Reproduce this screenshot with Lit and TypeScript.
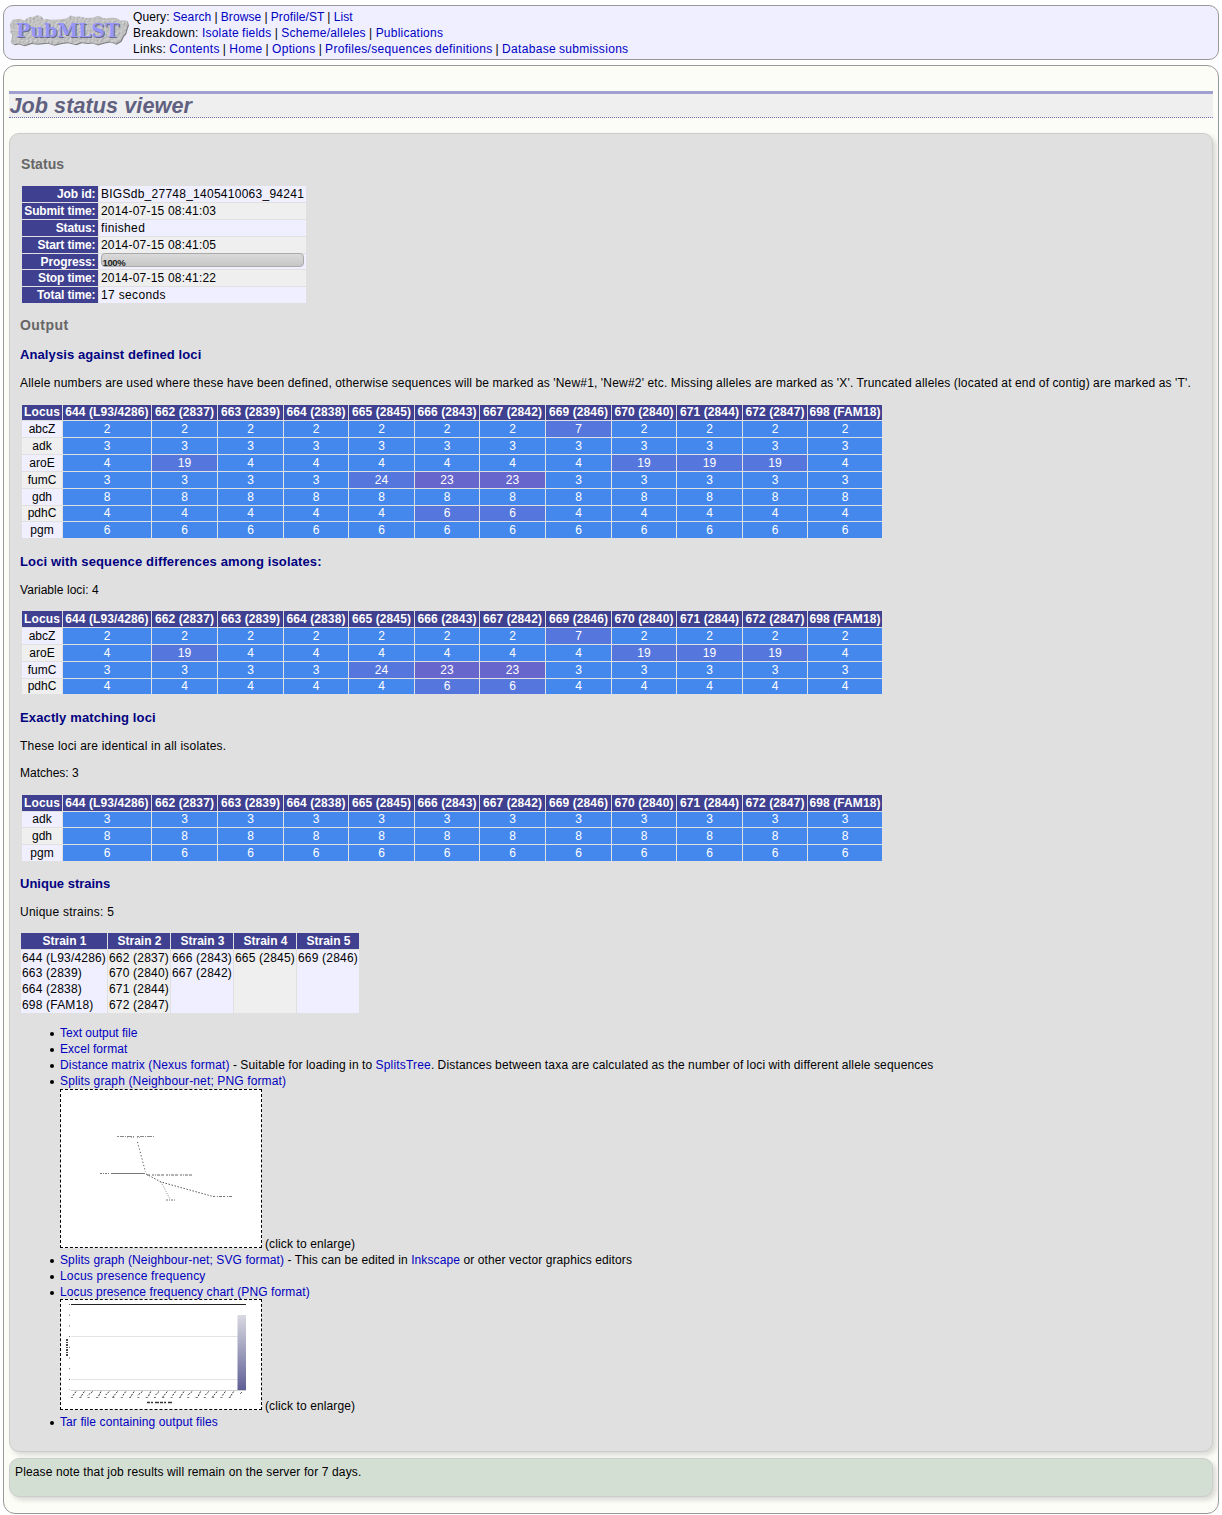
import { LitElement, html, css, svg } from "lit";
import { customElement, property } from "lit/decorators.js";
import { classMap } from "lit/directives/class-map.js";

const ISOLATES = [
  "644 (L93/4286)", "662 (2837)", "663 (2839)", "664 (2838)", "665 (2845)", "666 (2843)",
  "667 (2842)", "669 (2846)", "670 (2840)", "671 (2844)", "672 (2847)", "698 (FAM18)",
];

const ALLELES: Record<string, number[]> = {
  abcZ: [2, 2, 2, 2, 2, 2, 2, 7, 2, 2, 2, 2],
  adk: [3, 3, 3, 3, 3, 3, 3, 3, 3, 3, 3, 3],
  aroE: [4, 19, 4, 4, 4, 4, 4, 4, 19, 19, 19, 4],
  fumC: [3, 3, 3, 3, 24, 23, 23, 3, 3, 3, 3, 3],
  gdh: [8, 8, 8, 8, 8, 8, 8, 8, 8, 8, 8, 8],
  pdhC: [4, 4, 4, 4, 4, 6, 6, 4, 4, 4, 4, 4],
  pgm: [6, 6, 6, 6, 6, 6, 6, 6, 6, 6, 6, 6],
};

const STATUS: [string, string, string][] = [
  ["Job id:", "BIGSdb_27748_1405410063_94241", "s25"],
  ["Submit time:", "2014-07-15 08:41:03", "s20"],
  ["Status:", "finished", "s35"],
  ["Start time:", "2014-07-15 08:41:05", "s20"],
  ["Progress:", "100%", ""],
  ["Stop time:", "2014-07-15 08:41:22", "s20"],
  ["Total time:", "17 seconds", "s35"],
];

const STRAINS = [
  ["644 (L93/4286)", "663 (2839)", "664 (2838)", "698 (FAM18)"],
  ["662 (2837)", "670 (2840)", "671 (2844)", "672 (2847)"],
  ["666 (2843)", "667 (2842)"],
  ["665 (2845)"],
  ["669 (2846)"],
];

const ROCK =
  "M.7 10.700L3.300 5.700L7 5.200L11.700 4.700L14.500 6.500L20 3.300L24 2.800L28.300 1.200L32 2L34 5.500L38 5L43 5.700L48 5.500L53 5L58 4L61.700 1.500L66 2.800L70 2.600L78 4L84 3.500L90 1.800L94 4L98 4.300L103 3.600L108 4.200L111 6.500L118 6.500L119 10.700L117.500 15L116.500 19L114 22L111.700 26.700L106.700 29.700L101 27.500L95 28.500L88 30.500L83 28.500L78 29L72 28.300L66.700 30.200L58 28.300L52 29L45 30.700L38 28.700L28 29.800L22 29L15 31.200L9 29.500L5 30.300L1.500 28L2.300 25.700L3.300 20.700L.8 18L1.800 15.500Z";

@customElement("pub-logo")
class PubLogo extends LitElement {
  static styles = css`
    :host { display: block; width: 120px; height: 34px; }
    svg { display: block; }
    .name { font-family: "DejaVu Serif", serif; font-weight: bold; font-size: 17.6px; }
    .dark { fill: #6a6a84; }
    .light { fill: #9696f8; }
  `;
  render() {
    return html`<svg width="120" height="34" viewBox="0 0 120 34">
      <defs>
        <filter id="stone" x="0" y="0" width="1" height="1" color-interpolation-filters="sRGB">
          <feTurbulence type="fractalNoise" baseFrequency="0.55" numOctaves="2" seed="4" result="n"/>
          <feDiffuseLighting in="n" surfaceScale="0.55" diffuseConstant="1.12" lighting-color="#ccc" result="l">
            <feDistantLight azimuth="225" elevation="58"/>
          </feDiffuseLighting>
          <feComposite in="l" in2="SourceGraphic" operator="in"/>
        </filter>
      </defs>
      <path transform="translate(.9 1)" fill="#808080" d=${ROCK}/>
      <path filter="url(#stone)" fill="#bbb" d=${ROCK}/>
      <text class="name dark" x="8" y="23.6" textLength="103" lengthAdjust="spacingAndGlyphs">PubMLST</text>
      <text class="name light" x="7" y="22.7" textLength="103" lengthAdjust="spacingAndGlyphs">PubMLST</text>
    </svg>`;
  }
}

@customElement("locus-table")
class LocusTable extends LitElement {
  @property({ type: Array }) loci: string[] = [];

  static styles = css`
    :host { display: block; }
    .grid {
      display: grid; width: 860px; gap: 1px; margin-left: 2px;
      grid-template-columns: 40px 88px 65px 65px 64px 65px 64px 65px 65px 64px 65px 64px 74px;
      text-align: center; line-height: 17px; white-space: nowrap;
    }
    .all { grid-template-rows: 15px 16px 16px 16px 16px 16px 15px 16px; }
    .variable { grid-template-rows: 16px 16px 16px 16px 15px; }
    .same { grid-template-rows: 16px 15px 16px 16px; }
    .grid > * { height: 100%; overflow: visible; }
    .head { background: #404090; color: #fff; font-weight: bold; letter-spacing: .1px; }
    .all .head { line-height: 15px; }
    .locus { background: #efefff; }
    .even { background: #efefef; }
    .short { line-height: 15px; }
    .a0 { background: #4488ee; color: #fff; }
    .a1 { background: #5577dd; color: #fff; }
    .a2 { background: #6666cc; color: #fff; }
  `;

  private level(locus: string, value: number) {
    const seen = [...new Set(ALLELES[locus])];
    return "a" + seen.indexOf(value);
  }

  private isShort(r: number) {
    const n = this.loci.length;
    return (n === 7 && r === 5) || (n === 4 && r === 3) || (n === 3 && r === 0);
  }

  render() {
    const n = this.loci.length;
    return html`<div class=${classMap({ grid: true, all: n === 7, variable: n === 4, same: n === 3 })}>
      <div class="head">Locus</div>
      ${ISOLATES.map((i) => html`<div class="head">${i}</div>`)}
      ${this.loci.map((l, r) => {
        const s = this.isShort(r) ? "short" : "";
        return html`
        <div class="locus ${r % 2 ? "even" : ""} ${s}">${l}</div>
        ${ALLELES[l].map((v) => html`<div class="${this.level(l, v)} ${s}">${v}</div>`)}`;
      })}
    </div>`;
  }
}

@customElement("app-root")
class AppRoot extends LitElement {
  static styles = css`
    :host {
      display: block; height: 1515px; box-sizing: border-box; padding: 5px 3px 0; background: #fff;
      font-family: "Liberation Sans", Arial, sans-serif; font-size: 12px; line-height: 16px; color: #000;
    }
    * { box-sizing: border-box; }
    a { color: #0000bf; text-decoration: none; }
    .s05 { letter-spacing: .05px; }
    .s10 { letter-spacing: .1px; }
    .s13 { letter-spacing: .135px; }
    .s15 { letter-spacing: .155px; }
    .s20 { letter-spacing: .2px; }
    .s23 { letter-spacing: .235px; }
    .s25 { letter-spacing: .26px; }
    .s35 { letter-spacing: .35px; }
    .s45 { letter-spacing: .45px; }
    .nav1 { letter-spacing: .11px; word-spacing: -.4px; }
    .nav2 { letter-spacing: .23px; word-spacing: -.35px; }
    .nav3 { letter-spacing: .31px; word-spacing: -.6px; }
    .prose { letter-spacing: .206px; word-spacing: -.33px; }
    .matrix { letter-spacing: .178px; word-spacing: -.33px; }
    .banner {
      display: flex; gap: 4px; height: 55px; padding: 3px 5px; white-space: nowrap;
      background: #efefff; border: 1px solid #999; border-radius: 10px;
    }
    .banner pub-logo { margin-top: 5px; }
    .main {
      height: 1449px; margin-top: 5px; padding: 25px 5px 0; white-space: nowrap;
      background: #fcfdf7; border: 1px solid #999; border-radius: 12px;
    }
    .title {
      margin: 0; height: 27px; background: #efefef; border-top: 3px solid #a0a0d0; border-bottom: 1px dotted #7070b0;
      color: #606080; font-size: 21.6px; line-height: 23px; font-weight: bold; font-style: italic;
      letter-spacing: .08px; padding-left: .4px;
    }
    .panel {
      height: 1319px; margin-top: 15px; padding: 22px 10px 0; background: #e0e0e0;
      border: 1px solid #ccc; border-radius: 10px; box-shadow: 3px 3px 5px #d8d8d4;
    }
    .note {
      height: 39px; margin-top: 6px; padding: 5px; background: #d4dfd4;
      border: 1px solid #ccc; border-radius: 10px; box-shadow: 3px 3px 5px #d8d8d4;
    }
    h2 { margin: 0; font-size: 14px; line-height: 16px; color: #666; }
    h2.first { padding-left: 1px; }
    h3 { margin: 0; font-size: 13px; line-height: 16px; color: #000080; }
    p { margin: 0; }
    .status {
      display: grid; grid-template-columns: 76px 207px; gap: 1px; margin: 14px 0 14px 2px;
      grid-template-rows: 16px 16px 16px 16px 15px 16px 16px; line-height: 17px;
    }
    .key {
      background: #404090; color: #fff; font-weight: bold; text-align: right; padding-right: 2.5px; height: 100%;
      letter-spacing: -.12px;
    }
    .val { background: #efefff; padding-left: 2px; height: 100%; }
    .even { background: #efefef; }
    .bar {
      height: 14px; width: 203px; margin-top: -1px; padding: 3px 0 0 .5px; overflow: hidden;
      border: 1px solid #aaa; border-radius: 4px; background: linear-gradient(#dadada, #c6c6c6);
      font-size: 9.5px; line-height: 12px; font-weight: bold; color: #222; letter-spacing: -.4px;
    }
    .strains {
      display: grid; grid-template-columns: 86px 62px 62px 62px 62px; grid-template-rows: 16px 63px;
      gap: 1px; margin: 13px 0 0 1px;
    }
    .shead { background: #404090; color: #fff; font-weight: bold; text-align: center; padding-left: 1px; }
    .strain { background: #efefff; padding-left: 1px; letter-spacing: .19px; }
    .strain div:nth-child(n + 2) { margin-top: -1px; }
    .strain div:nth-child(n + 3) { margin-top: 0; }
    .strain.even { background: #efefef; }
    ul { margin: 12px 0 0; padding: 0 0 0 40px; list-style: none; }
    li.item::before {
      content: ""; float: left; width: 4.400px; height: 4.400px; margin: 6.800px 0 0 -10.200px; border-radius: 50%; background: #000;
    }
    .shot { display: flex; align-items: flex-end; gap: 3px; padding-bottom: 4px; letter-spacing: .12px; }
    .net { height: 163px; }
    .freq { height: 114px; }
    .shot span { margin-bottom: -4px; }
    .pic { width: 202px; border: 1px dashed #000; background: #fff; flex: none; }
    .net .pic { height: 159px; }
    .freq .pic { height: 111px; }
    .pic svg { display: block; }
    .g11 { margin-top: 11px; }
    .g12 { margin-top: 12px; }
    .g13 { margin-top: 13px; }
    .g14 { margin-top: 14px; }
    .g15 { margin-top: 15px; }
    .g16 { margin-top: 16px; }
  `;

  private net() {
    return svg`<svg width="200" height="157" viewBox="61 1090 200 157" fill="none" stroke="#777" stroke-width="1">
      <path d="M137.500 1142L145.500 1172" stroke-dasharray="1.200 2.200" stroke="#555"/>
      <path d="M111 1173.500H145"/>
      <path d="M146 1174L161 1182L213 1196.500" stroke-dasharray="1.500 1.600" stroke="#555"/>
      <path d="M161 1182L170 1199" stroke-dasharray="1 1.500" stroke="#888"/>
      <path d="M117 1136.500H157" stroke-dasharray="2 1 4 1 1 1 5 1 1 3" stroke="#888"/>
      <path d="M127 1137.500H143" stroke-dasharray="1 3 1 1" stroke="#aaa"/>
      <path d="M100 1173.500H109" stroke-dasharray="2 1 1 1"/>
      <path d="M147 1175H192" stroke-dasharray="3 2 2 1 1 1 3 1" stroke="#666"/>
      <path d="M213 1196.500H233" stroke-dasharray="2 2 1 1 3 1"/>
      <path d="M166 1200H175" stroke-dasharray="2 1 1 1"/>
    </svg>`;
  }

  private chart() {
    const ticks = Array.from({ length: 20 }, (_, i) => 72 + i * 8.3);
    return svg`<svg width="200" height="109" viewBox="61 1300 200 109" fill="none">
      <defs><linearGradient id="bar" x2="0" y2="1">
        <stop offset="0" stop-color="#d9d9e2"/><stop offset="1" stop-color="#5f5f96"/>
      </linearGradient></defs>
      <path d="M71 1304.500H246" stroke="#222"/>
      <path d="M71 1336.500H238M71 1379.500H238" stroke="#e3e3e3"/>
      <path d="M71 1390.500H246" stroke="#ccc"/>
      <rect x="237.500" y="1315" width="8.500" height="75" fill="url(#bar)"/>
      <path d="M69.500 1304v86" stroke="#666" stroke-dasharray="1 9.700"/>
      <path d="M67 1339v17" stroke="#333" stroke-width="1.800" stroke-dasharray="2 1 1 1"/>
      ${ticks.map((x, i) => svg`<path d="M${x + 4} 1391.500l-${3 + (i % 3)} ${4 + (i % 2) * 2}" stroke="#333" stroke-dasharray="2 1"/>
        <path d="M${x - 1} 1397.500h2" stroke="#777"/>`)}
      <path d="M240 1394l2-2" stroke="#666"/>
      <path d="M147 1402.500H173" stroke="#333" stroke-width="1.500" stroke-dasharray="3 1 2 2 4 1"/>
    </svg>`;
  }

  render() {
    return html`
      <header class="banner">
        <pub-logo></pub-logo>
        <nav>
          <div class="nav1">Query: <a>Search</a> | <a>Browse</a> | <a>Profile/ST</a> | <a>List</a></div>
          <div class="nav2">Breakdown: <a>Isolate fields</a> | <a>Scheme/alleles</a> | <a>Publications</a></div>
          <div class="nav3">Links: <a>Contents</a> | <a>Home</a> | <a>Options</a> | <a>Profiles/sequences definitions</a> | <a>Database submissions</a></div>
        </nav>
      </header>
      <main class="main">
        <h1 class="title">Job status viewer</h1>
        <section class="panel">
          <h2 class="first s05">Status</h2>
          <div class="status">
            ${STATUS.map(([k, v, s], r) => html`<div class="key">${k}</div>
              <div class="val ${r % 2 ? "even" : ""} ${s}">${v === "100%" ? html`<div class="bar">${v}</div>` : v}</div>`)}
          </div>
          <h2 class="s45">Output</h2>
          <h3 class="g14 s10">Analysis against defined loci</h3>
          <p class="g12 prose">Allele numbers are used where these have been defined, otherwise sequences will be marked as 'New#1, 'New#2' etc. Missing alleles are marked as 'X'. Truncated alleles (located at end of contig) are marked as 'T'.</p>
          <locus-table class="g14" .loci=${Object.keys(ALLELES)}></locus-table>
          <h3 class="g16 s13">Loci with sequence differences among isolates:</h3>
          <p class="g12 s05">Variable loci: 4</p>
          <locus-table class="g13" .loci=${["abcZ", "aroE", "fumC", "pdhC"]}></locus-table>
          <h3 class="g16 s13">Exactly matching loci</h3>
          <p class="g12 s20">These loci are identical in all isolates.</p>
          <p class="g11">Matches: 3</p>
          <locus-table class="g14" .loci=${["adk", "gdh", "pgm"]}></locus-table>
          <h3 class="g15">Unique strains</h3>
          <p class="g12 s23">Unique strains: 5</p>
          <div class="strains">
            ${STRAINS.map((_, i) => html`<div class="shead">Strain ${i + 1}</div>`)}
            ${STRAINS.map((s, i) => html`<div class="strain ${i % 2 ? "even" : ""}">${s.map((n) => html`<div>${n}</div>`)}</div>`)}
          </div>
          <ul>
            <li class="item"><a>Text output file</a></li>
            <li class="item"><a class="s05">Excel format</a></li>
            <li class="item matrix"><a>Distance matrix (Nexus format)</a> - Suitable for loading in to <a>SplitsTree</a>. Distances between taxa are calculated as the number of loci with different allele sequences</li>
            <li class="item"><a class="s13">Splits graph (Neighbour-net; PNG format)</a>
              <div class="shot net"><div class="pic">${this.net()}</div><span>(click to enlarge)</span></div></li>
            <li class="item s10"><a>Splits graph (Neighbour-net; SVG format)</a> - This can be edited in <a>Inkscape</a> or other vector graphics editors</li>
            <li class="item"><a class="s20">Locus presence frequency</a></li>
            <li class="item"><a class="s10">Locus presence frequency chart (PNG format)</a>
              <div class="shot freq"><div class="pic">${this.chart()}</div><span>(click to enlarge)</span></div></li>
            <li class="item"><a class="s10">Tar file containing output files</a></li>
          </ul>
        </section>
        <aside class="note s13">Please note that job results will remain on the server for 7 days.</aside>
      </main>`;
  }
}
